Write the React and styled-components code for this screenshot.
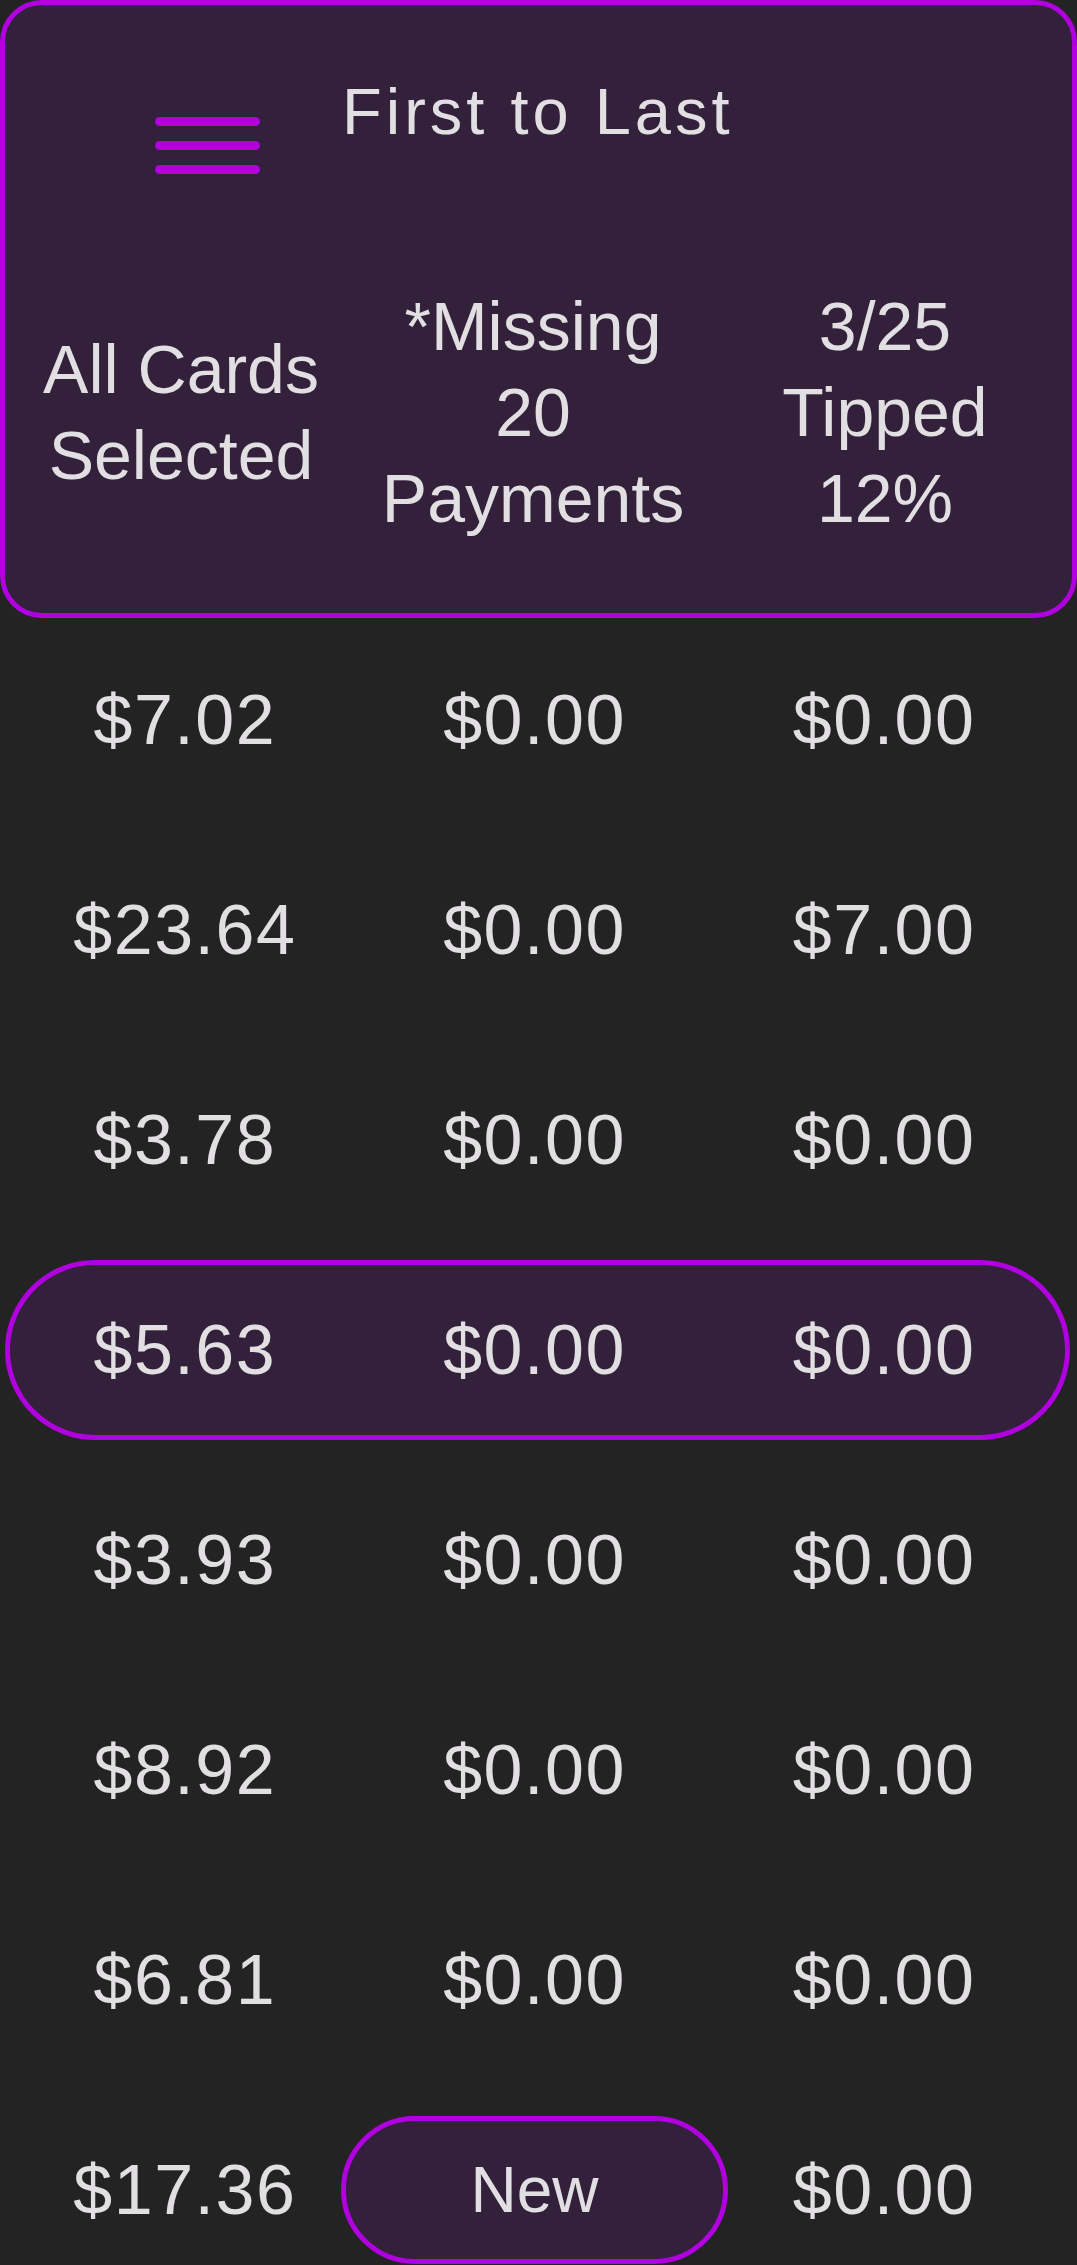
import styled, { createGlobalStyle } from 'styled-components';

const GlobalStyle = createGlobalStyle`
  html, body {
    margin: 0;
    padding: 0;
    background: #232323;
  }
  body {
    font-family: "Liberation Sans", Arial, sans-serif;
    color: #e2dfe2;
  }
  * {
    box-sizing: border-box;
  }
`;

const Page = styled.div`
  width: 1077px;
  background: #232323;
`;

const HeaderCard = styled.header`
  height: 618px;
  background: #33203b;
  border: 5px solid #b000e0;
  border-radius: 42px;
  display: flex;
  flex-direction: column;
`;

const TopBar = styled.div`
  display: flex;
  align-items: flex-start;
  padding: 69px 0 0 150px;
`;

const MenuButton = styled.button`
  display: flex;
  flex-direction: column;
  gap: 15px;
  width: 105px;
  margin-top: 43px;
  padding: 0;
  background: none;
  border: none;
  cursor: pointer;
`;

const MenuBar = styled.span`
  display: block;
  height: 9px;
  border-radius: 5px;
  background: #b000e0;
`;

const Title = styled.h1`
  margin: 0 0 0 82px;
  font-size: 65px;
  font-weight: 400;
  line-height: 75px;
  letter-spacing: 4px;
  color: #e2dfe2;
`;

const StatsGrid = styled.div`
  display: grid;
  grid-template-columns: repeat(3, 352px);
  align-items: center;
  margin-top: 109px;
`;

const Stat = styled.div`
  text-align: center;
  font-size: 68px;
  line-height: 86px;
`;

const List = styled.div`
  display: flex;
  flex-direction: column;
  margin-top: -3px;
`;

const RowSlot = styled.div`
  height: 210px;
  padding: 15px 0;
`;

const Row = styled.div`
  height: 180px;
  margin: 0 7px 0 5px;
  padding-right: 6px;
  display: grid;
  grid-template-columns: repeat(3, minmax(0, 1fr));
  align-items: center;
  border: 5px solid ${({ $selected }) => ($selected ? '#b000e0' : 'transparent')};
  border-radius: 90px;
  background: ${({ $selected }) => ($selected ? '#33203b' : 'transparent')};
`;

const Amount = styled.div`
  text-align: center;
  font-size: 70px;
  letter-spacing: 1.5px;
  white-space: nowrap;
`;

const NewCell = styled.div`
  display: flex;
  justify-content: center;
`;

const NewButton = styled.button`
  flex: none;
  width: 387px;
  height: 148px;
  border: 5px solid #b000e0;
  border-radius: 74px;
  background: #33203b;
  color: #e2dfe2;
  font-family: "Liberation Sans", Arial, sans-serif;
  font-size: 64px;
  padding: 0;
  cursor: pointer;
`;

const rows = [
  ['$7.02', '$0.00', '$0.00'],
  ['$23.64', '$0.00', '$7.00'],
  ['$3.78', '$0.00', '$0.00'],
  ['$5.63', '$0.00', '$0.00', true],
  ['$3.93', '$0.00', '$0.00'],
  ['$8.92', '$0.00', '$0.00'],
  ['$6.81', '$0.00', '$0.00'],
];

export default function App() {
  return (
    <Page>
      <GlobalStyle />
      <HeaderCard>
        <TopBar>
          <MenuButton aria-label="Menu">
            <MenuBar />
            <MenuBar />
            <MenuBar />
          </MenuButton>
          <Title>First to Last</Title>
        </TopBar>
        <StatsGrid>
          <Stat>All Cards<br />Selected</Stat>
          <Stat>*Missing<br />20<br />Payments</Stat>
          <Stat>3/25<br />Tipped<br />12%</Stat>
        </StatsGrid>
      </HeaderCard>
      <List>
        {rows.map(([a, b, c, selected], i) => (
          <RowSlot key={i}>
            <Row $selected={selected}>
              <Amount>{a}</Amount>
              <Amount>{b}</Amount>
              <Amount>{c}</Amount>
            </Row>
          </RowSlot>
        ))}
        <RowSlot>
          <Row>
            <Amount>$17.36</Amount>
            <NewCell>
              <NewButton>New</NewButton>
            </NewCell>
            <Amount>$0.00</Amount>
          </Row>
        </RowSlot>
      </List>
    </Page>
  );
}
